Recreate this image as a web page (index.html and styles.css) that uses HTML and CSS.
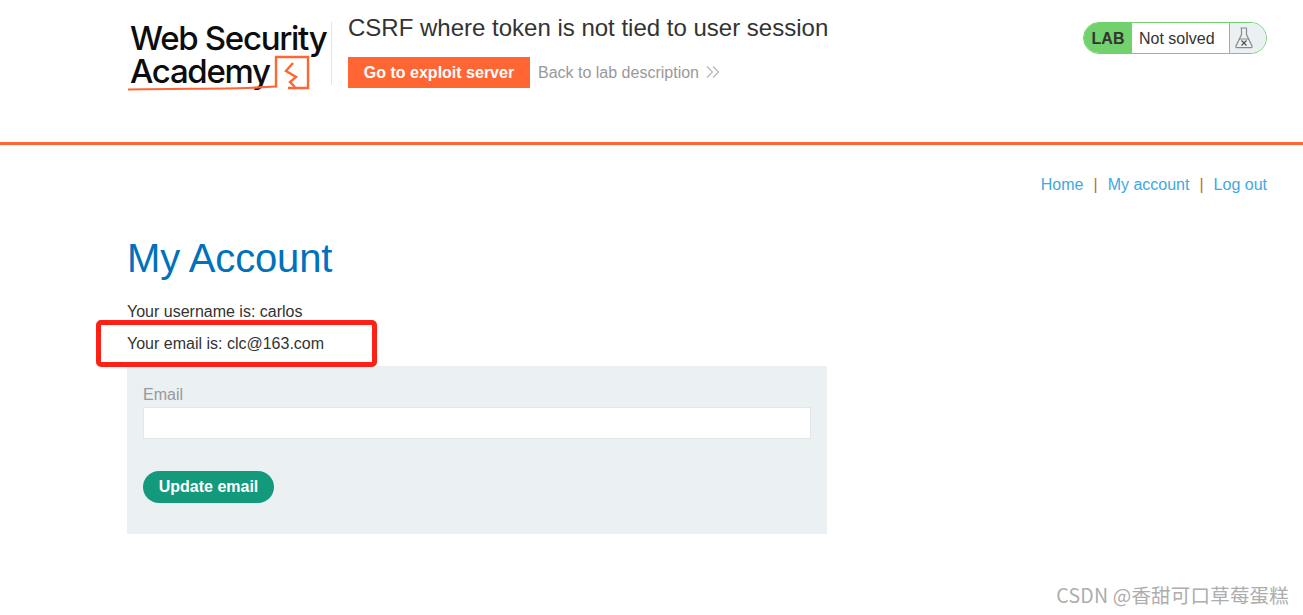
FILE: index.html
```html
<!DOCTYPE html>
<html lang="en">
<head>
  <meta charset="UTF-8" />
  <title>CSRF where token is not tied to user session</title>
  <link rel="stylesheet" href="styles.css">
</head>
<body>

  <header class="lab-header">
    <div class="logo">
      <div class="logo-words">
        <span class="logo-line">Web Security</span>
        <span class="logo-line">Academy</span>
      </div>
      <svg class="logo-mark" width="200" height="78" viewBox="0 0 200 78" fill="none">
        <path d="M1 67.5 C40 66.5 90 67 120 66 L149 64.5" stroke="#ff6633" stroke-width="2.2" />
        <path d="M149 65.5 V35 H181 V66 H161" stroke="#ff6633" stroke-width="2.4" />
        <path d="M166 41 L159 49 L169 55 L163 60 L168 65" stroke="#ff6633" stroke-width="2.4" />
      </svg>
    </div>
    <div class="lab-title">
      <h2>CSRF where token is not tied to user session</h2>
      <div class="lab-links">
        <a class="exploit-btn" href="#">Go to exploit server</a>
        <a class="back-link" href="#">Back to lab description
          <svg class="back-arrows" width="14" height="12" viewBox="0 0 14 12" fill="none" stroke="#b3b3b3" stroke-width="1.1">
            <path d="M1 0.5 L6.5 6 L1 11.5" />
            <path d="M7 0.5 L12.5 6 L7 11.5" />
          </svg>
        </a>
      </div>
    </div>
    <div class="lab-status">
      <span class="status-lab">LAB</span>
      <span class="status-text">Not solved</span>
      <span class="status-icon">
        <svg width="18" height="22" viewBox="0 0 18 22" fill="none" stroke="#8a8a8a" stroke-width="1.2">
          <path d="M5.5 1 H12" />
          <path d="M6.5 1 V7.5 L1 19 C0.6 20.2 1 20.6 2 20.6 H16 C17 20.6 17.4 20.2 17 19 L11.5 7.5 V1" />
          <path d="M4 12 H14" />
          <path d="M6.5 13.5 L11.5 18.5 M11.5 13.5 L6.5 18.5" stroke="#555" stroke-width="1.3" />
        </svg>
      </span>
    </div>
  </header>

  <main class="page">
    <nav class="top-nav">
      <a href="#">Home</a>
      <span class="sep">|</span>
      <a href="#">My account</a>
      <span class="sep">|</span>
      <a href="#">Log out</a>
    </nav>

    <h1>My Account</h1>
    <p class="info">Your username is: carlos</p>
    <p class="info">Your email is: clc@163.com</p>

    <form class="email-form">
      <label for="email">Email</label>
      <input type="email" id="email" />
      <button type="button">Update email</button>
    </form>
  </main>

  <!-- annotation drawn over the screenshot -->
  <div class="red-box"></div>
  <div class="watermark">CSDN @香甜可口草莓蛋糕</div>

</body>
</html>
```

FILE: styles.css
```css
html, body {
  height: 100%;
}

body {
  margin: 0;
  font-family: "Liberation Sans", Arial, sans-serif;
  font-size: 16px;
  color: #333332;
  background-color: #fff;
  overflow: hidden;
  position: relative;
}

a {
  text-decoration: none;
}

.lab-header {
  display: flex;
  align-items: flex-start;
  height: 142px;
  padding: 0 36px 0 127px;
  border-bottom: 3px solid #ff6633;
  box-sizing: content-box;
}

.logo {
  position: relative;
  width: 204px;
  height: 63px;
  margin-top: 22px;
  border-right: 1px solid #e4e4e4;
  flex-shrink: 0;
  box-sizing: content-box;
}

.logo-words {
  font-family: Inter, sans-serif;
  font-size: 33px;
  font-weight: 500;
  line-height: 33px;
  letter-spacing: -1.3px;
  color: #0d0d0d;
  padding-left: 3px;
}

.logo-line {
  display: block;
  white-space: nowrap;
}

.logo-mark {
  position: absolute;
  left: 0;
  top: 0;
}

.lab-title {
  margin-left: 16px;
  flex: 1;
}

.lab-title h2 {
  margin: 14px 0 0;
  font-size: 24px;
  font-weight: normal;
  line-height: 28px;
}

.lab-links {
  display: flex;
  align-items: center;
  margin-top: 15px;
}

.exploit-btn {
  display: block;
  width: 182px;
  height: 31px;
  line-height: 31px;
  text-align: center;
  background-color: #ff6633;
  color: #fff;
  font-weight: bold;
}

.back-link {
  margin-left: 8px;
  color: #999;
}

.back-arrows {
  margin-left: 3px;
}

.lab-status {
  display: flex;
  width: 184px;
  height: 32px;
  margin-top: 22px;
  border: 1px solid #70d16d;
  border-radius: 16px;
  overflow: hidden;
  box-sizing: border-box;
  line-height: 31px;
}

.status-lab {
  width: 48px;
  background-color: #70d16d;
  font-weight: bold;
  text-align: center;
}

.status-text {
  width: 98px;
  padding-left: 7px;
  box-sizing: border-box;
  border-right: 1px solid #70d16d;
}

.status-icon {
  flex: 1;
  background-color: #ebf0f2;
  display: flex;
  align-items: center;
  padding-left: 5px;
}

.page {
  padding: 0 36px 0 127px;
}

.top-nav {
  display: flex;
  justify-content: flex-end;
  gap: 10px;
  margin-top: 31px;
  line-height: 18px;
}

.top-nav a {
  color: #3ea9e0;
}

.sep {
  color: #c46a10;
}

h1 {
  margin: 40px 0 0;
  font-size: 40px;
  font-weight: normal;
  line-height: 48px;
  letter-spacing: -0.15px;
  color: #0071bc;
}

.info {
  margin: 0;
  height: 32px;
  line-height: 32px;
}

h1 + .info {
  margin-top: 14px;
}

.email-form {
  width: 700px;
  height: 168px;
  margin-top: 6px;
  padding: 20px 16px 0;
  box-sizing: border-box;
  background-color: #ebf0f2;
}

.email-form label {
  display: block;
  color: #999;
  line-height: 18px;
}

.email-form input {
  display: block;
  width: 100%;
  height: 32px;
  margin-top: 3px;
  box-sizing: border-box;
  background-color: #fff;
  border: 1px solid #e2e6e8;
}

.email-form button {
  display: block;
  width: 131px;
  height: 32px;
  margin-top: 32px;
  padding: 0;
  border: none;
  border-radius: 16px;
  background-color: #139a7d;
  color: #fff;
  font-family: inherit;
  font-size: 16px;
  font-weight: bold;
}

.red-box {
  position: absolute;
  left: 96px;
  top: 320px;
  width: 281px;
  height: 47px;
  box-sizing: border-box;
  border: 5px solid #ff2016;
  border-radius: 5px;
}

.watermark {
  position: absolute;
  right: 14px;
  top: 584px;
  font-family: "Noto Sans CJK SC", "Liberation Sans", sans-serif;
  font-size: 19.5px;
  letter-spacing: 0.2px;
  line-height: 22px;
  color: #adadad;
}
```
